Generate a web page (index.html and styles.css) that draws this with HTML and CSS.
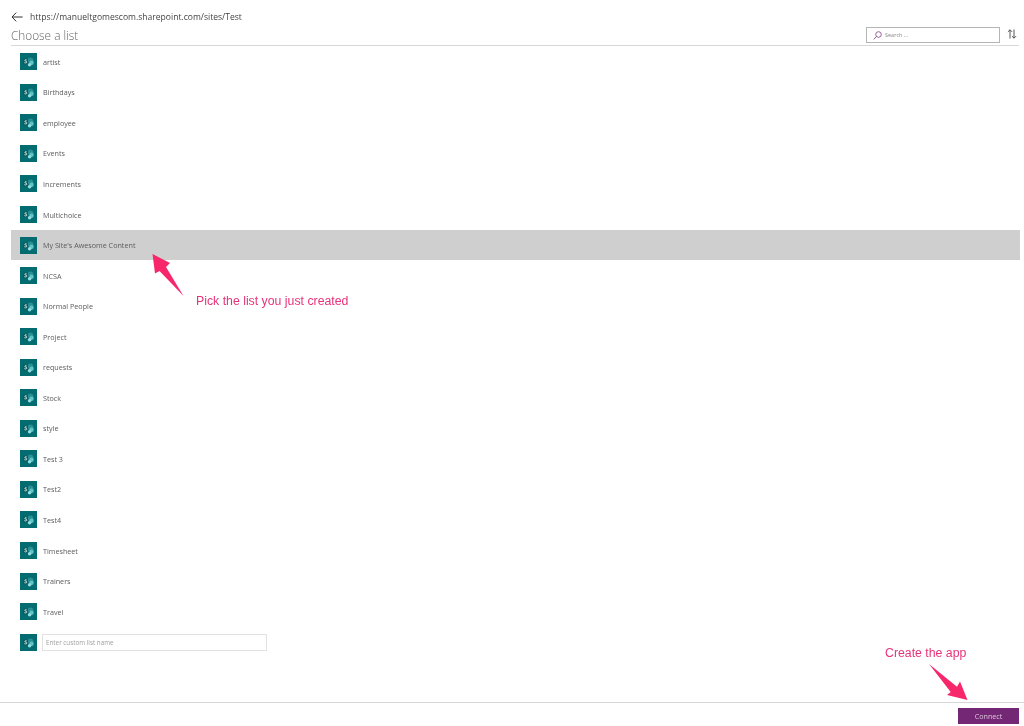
FILE: index.html
```html
<!DOCTYPE html>
<html lang="en">
<head>
<meta charset="utf-8">
<title>Choose a list</title>
<link rel="stylesheet" href="styles.css">
</head>
<body>
<svg width="0" height="0" class="defs"><defs>
<symbol id="sp" viewBox="0 0 17 17">
<rect width="17" height="17" fill="#036c70"/>
<circle cx="10.5" cy="7.2" r="2.8" fill="#2a8f95"/>
<circle cx="11.6" cy="9.8" r="2.2" fill="#5cc3c8"/>
<circle cx="9.6" cy="11.8" r="1.8" fill="#8fdde0"/>
<rect x="3.2" y="5.8" width="4.6" height="5.4" fill="#0b5a5d"/>
<path d="M6.700 7c-.5-.4-1.900-.4-1.900.4s2 .7 2 1.700-1.700 1-2.400.5" fill="none" stroke="#fff" stroke-width=".8"/>
</symbol>
</defs></svg>
<div class="page">
<header class="top">
<div class="crumb">
<svg class="back" width="12" height="10" viewBox="0 0 12 10"><path d="M5.200.6 1 5l4.200 4.400M1 5h10.600" fill="none" stroke="#333" stroke-width="1"/></svg>
<span>https://manueltgomescom.sharepoint.com/sites/Test</span>
</div>
<div class="titlebar">
<h1>Choose a list</h1>
<div class="search">
<svg width="9" height="9" viewBox="0 0 9 9"><circle cx="5.500" cy="3.500" r="2.800" fill="none" stroke="#8a4f8a" stroke-width=".9"/><path d="M3.400 5.600.7 8.400" stroke="#8a4f8a" stroke-width=".9"/></svg>
<span>Search ...</span>
</div>
<svg class="sort" width="10" height="10" viewBox="0 0 10 10"><path d="M3 9.500V.8M.9 2.900 3 .8l2.100 2.100M7 .5v8.700M4.900 7.100 7 9.200l2.100-2.100" fill="none" stroke="#444" stroke-width=".9"/></svg>
</div>
</header>
<main class="list">
<div class="row"><svg class="icon"><use href="#sp"/></svg><span>artist</span></div>
<div class="row"><svg class="icon"><use href="#sp"/></svg><span>Birthdays</span></div>
<div class="row"><svg class="icon"><use href="#sp"/></svg><span>employee</span></div>
<div class="row"><svg class="icon"><use href="#sp"/></svg><span>Events</span></div>
<div class="row"><svg class="icon"><use href="#sp"/></svg><span>Increments</span></div>
<div class="row"><svg class="icon"><use href="#sp"/></svg><span>Multichoice</span></div>
<div class="row selected"><svg class="icon"><use href="#sp"/></svg><span>My Site's Awesome Content</span></div>
<div class="row"><svg class="icon"><use href="#sp"/></svg><span>NCSA</span></div>
<div class="row"><svg class="icon"><use href="#sp"/></svg><span>Normal People</span></div>
<div class="row"><svg class="icon"><use href="#sp"/></svg><span>Project</span></div>
<div class="row"><svg class="icon"><use href="#sp"/></svg><span>requests</span></div>
<div class="row"><svg class="icon"><use href="#sp"/></svg><span>Stock</span></div>
<div class="row"><svg class="icon"><use href="#sp"/></svg><span>style</span></div>
<div class="row"><svg class="icon"><use href="#sp"/></svg><span>Test 3</span></div>
<div class="row"><svg class="icon"><use href="#sp"/></svg><span>Test2</span></div>
<div class="row"><svg class="icon"><use href="#sp"/></svg><span>Test4</span></div>
<div class="row"><svg class="icon"><use href="#sp"/></svg><span>Timesheet</span></div>
<div class="row"><svg class="icon"><use href="#sp"/></svg><span>Trainers</span></div>
<div class="row"><svg class="icon"><use href="#sp"/></svg><span>Travel</span></div>
<div class="row custom"><svg class="icon"><use href="#sp"/></svg><div class="field">Enter custom list name</div></div>
</main>
<footer class="foot"><div class="connect">Connect</div></footer>
<svg class="marks" width="1024" height="726" viewBox="0 0 1024 726">
<path class="arrow" d="M152.500 254 170 263 166 267 183.500 296 159.500 271 155 273.500Z"/>
<path class="arrow" d="M967.500 700 947 695 950.700 692 929 664 957 686.700 960 681.500Z"/>
</svg>
<div class="note note-list">Pick the list you just created</div>
<div class="note note-app">Create the app</div>
</div>
</body>
</html>
```
FILE: styles.css
```css
* { box-sizing: border-box; }
html, body { margin: 0; padding: 0; background: #fff; }
body { font-family: "Open Sans", "Liberation Sans", sans-serif; color: #555; }
.defs { position: absolute; }
.page { position: relative; width: 1024px; height: 726px; overflow: hidden; display: flex; flex-direction: column; filter: blur(0.3px); }
.top { height: 46px; margin: 0 5px 0 11px; border-bottom: 1px solid #d8d8d8; display: flex; flex-direction: column; }
.crumb { display: flex; align-items: center; gap: 7px; height: 27px; padding-top: 7px; font-size: 8.55px; color: #444; }
.titlebar { display: flex; align-items: flex-start; flex: 1; }
.titlebar h1 { flex: 1; margin: 0; font-size: 11.8px; line-height: 19px; font-weight: 300; color: #666; }
.search { width: 134px; height: 16px; margin: 1px 6.5px 0 0; border: 1px solid #b5b5b5; display: flex; align-items: center; gap: 3px; padding-left: 6px; font-size: 5.5px; color: #888; }
.sort { margin-top: 3px; margin-right: 2.500px; }
.list { padding: 0.5px 4px 0 11px; flex: 1; }
.row { height: 30.56px; display: flex; align-items: center; gap: 6px; padding-left: 9px; font-size: 7.2px; color: #5c5c5c; }
.row.selected { background: #cfcfcf; }
.icon { width: 17px; height: 17px; flex: none; }
.field { width: 225px; height: 17px; border: 1px solid #e2e2e2; display: flex; align-items: center; padding-left: 3px; font-size: 6.3px; color: #a0a0a0; margin-left: -1px; }
.foot { height: 24px; border-top: 1px solid #d6d6d6; display: flex; justify-content: flex-end; align-items: flex-start; padding: 5px 5px 0 0; }
.connect { width: 61px; height: 16px; background: #742774; color: #ddc6dd; font-size: 7.2px; display: flex; align-items: center; justify-content: center; }
.marks { position: absolute; left: 0; top: 0; }
.arrow { fill: #f8276b; }
.note { position: absolute; font-family: "Liberation Sans", sans-serif; font-size: 12.3px; line-height: 14px; color: #e6347a; white-space: nowrap; }
.note-list { left: 196px; top: 294px; }
.note-app { left: 885px; top: 646px; }
```
